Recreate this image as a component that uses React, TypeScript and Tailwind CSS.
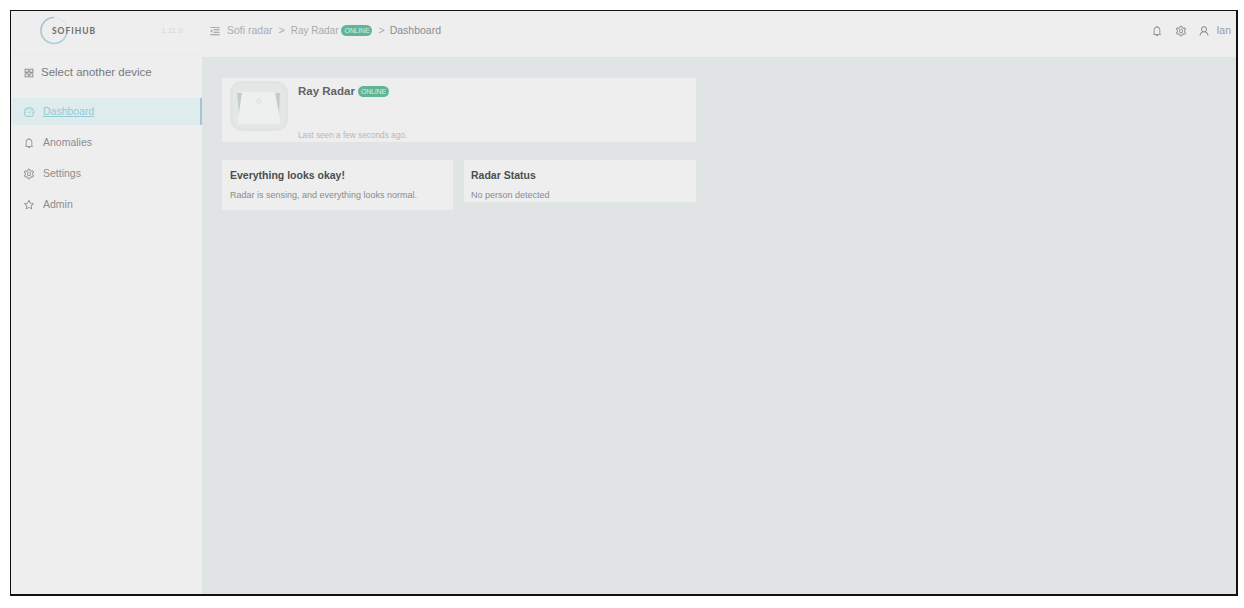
import React from 'react';
import {
  AiOutlineAppstore,
  AiOutlineBell,
  AiOutlineDashboard,
  AiOutlineMenuFold,
  AiOutlineSetting,
  AiOutlineStar,
  AiOutlineUser,
} from 'react-icons/ai';
import type { IconType } from 'react-icons';

interface NavItem {
  label: string;
  icon: IconType;
  active?: boolean;
}

const NAV_ITEMS: NavItem[] = [
  { label: 'Dashboard', icon: AiOutlineDashboard, active: true },
  { label: 'Anomalies', icon: AiOutlineBell },
  { label: 'Settings', icon: AiOutlineSetting },
  { label: 'Admin', icon: AiOutlineStar },
];

const OnlineBadge: React.FC = () => (
  <span className="flex h-[11px] w-[31px] items-center justify-center rounded-full bg-[#5fb596] text-[7px] leading-none tracking-tight text-[#d3efe4]">
    ONLINE
  </span>
);

const Logo: React.FC = () => (
  <svg className="h-[30px] w-[60px]" viewBox="0 0 60 30" fill="none">
    <defs>
      <linearGradient id="ring" x1="0" y1="0" x2="1" y2="1">
        <stop offset="0" stopColor="#a9bdc6" />
        <stop offset="1" stopColor="#a9d6de" />
      </linearGradient>
    </defs>
    <path d="M15 1.5A13 13 0 1 0 27.5 18" stroke="url(#ring)" strokeWidth="1.6" />
    <path d="M15 1.5A13 13 0 0 1 27.5 18" stroke="#dbe6e8" strokeWidth="1.2" />
    <text
      x="13"
      y="18"
      textLength="43"
      className="fill-[#6a6d70] font-['Lato','Liberation_Sans',sans-serif] text-[8.5px] font-bold"
    >
      SOFIHUB
    </text>
  </svg>
);

const RadarPicture: React.FC = () => (
  <svg className="h-[52px] w-[60px] shrink-0" viewBox="0 0 60 52">
    <rect x="1" y="1" width="58" height="50" rx="12" fill="#e0e5e3" />
    <rect x="4" y="4" width="52" height="44" rx="9" fill="#e3e7e6" />
    <path d="M8 13h6L10 34z" fill="#c6cbca" />
    <path d="M45 13h6l-1 21z" fill="#c6cbca" />
    <path d="M13 12h33l5 28q1 4-3 4H12q-4 0-3-4z" fill="#eeefef" />
    <circle cx="30" cy="21" r="2.5" fill="#e9e9e9" stroke="#e4e4e4" />
  </svg>
);

const Sidebar: React.FC = () => (
  <aside className="flex w-[191px] shrink-0 flex-col bg-[#eeeeee]">
    <div className="flex h-[45px] items-center justify-between border-b border-[#ebebec] pr-[19px] pb-[5px] pl-[28px]">
      <Logo />
      <span className="text-[8px] text-[#d5d5d7]">1.11.0</span>
    </div>
    <div className="flex h-[33px] items-center gap-[6px] pl-[12px] text-[11.5px] text-[#77797b]">
      <AiOutlineAppstore className="size-[12px] shrink-0" />
      <span>Select another device</span>
    </div>
    <nav className="mt-[9px] flex flex-col gap-[4px]">
      {NAV_ITEMS.map(({ label, icon: Icon, active }) => (
        <a
          key={label}
          className={
            active
              ? 'flex h-[27px] items-center gap-[8px] border-r-2 border-[#a3c5d0] bg-[#dfeced] pl-[12px] text-[10.5px] text-[#93cad4] underline'
              : 'flex h-[27px] items-center gap-[8px] pl-[12px] text-[10.5px] text-[#8b8d8f]'
          }
        >
          <Icon className="size-[12px] shrink-0" />
          <span>{label}</span>
        </a>
      ))}
    </nav>
  </aside>
);

const Header: React.FC = () => (
  <header className="flex h-[46px] shrink-0 items-center justify-between bg-[#eeeeee] pr-[5px] pb-[7px] pl-[7px] text-[10.5px]">
    <div className="flex items-center text-[#a9abac]">
      <AiOutlineMenuFold className="mr-[6px] size-[12px] text-[#96989a]" />
      <span>Sofi radar</span>
      <span className="mx-[6px]">&gt;</span>
      <span className="mr-[3px] text-[10px]">Ray Radar</span>
      <OnlineBadge />
      <span className="mr-[5px] ml-[6px]">&gt;</span>
      <span className="text-[#8b8d8f]">Dashboard</span>
    </div>
    <div className="flex items-center text-[#85878a]">
      <AiOutlineBell className="mr-[12px] size-[12px]" />
      <AiOutlineSetting className="mr-[11px] size-[12px]" />
      <AiOutlineUser className="mr-[6px] size-[12px]" />
      <span className="text-[#9b9d9f]">Ian</span>
    </div>
  </header>
);

interface StatusCardProps {
  title: string;
  message: string;
  className: string;
}

const StatusCard: React.FC<StatusCardProps> = ({ title, message, className }) => (
  <section className={`bg-[#eeeeee] pt-[7px] ${className}`}>
    <h2 className="text-[10.5px] leading-[16px] font-bold text-[#4c4d4f]">{title}</h2>
    <p className="mt-[6px] text-[9px] leading-[12px] text-[#8b8c8e]">{message}</p>
  </section>
);

export default function App() {
  return (
    <div className="h-[608px] w-[1244px] bg-white pt-[10px] pl-[10px] font-['Liberation_Sans',Arial,sans-serif]">
      <div className="flex h-[586px] w-[1228px] border-t border-r-2 border-b-2 border-l border-[#111111] bg-[#e0e4e5]">
        <Sidebar />
        <div className="flex min-w-0 flex-1 flex-col">
          <Header />
          <main className="flex w-[494px] flex-col gap-[18px] pt-[21px] pl-[20px]">
            <section className="flex h-[64px] gap-[9px] bg-[#eeeeee] pt-[2px] pl-[7px]">
              <RadarPicture />
              <div className="flex flex-col justify-between pt-[4px] pb-[1px]">
                <div className="flex items-center gap-[3px]">
                  <h1 className="text-[11.5px] leading-[14px] font-bold text-[#626466]">Ray Radar</h1>
                  <OnlineBadge />
                </div>
                <p className="text-[8.25px] leading-[11px] text-[#b6b8b9]">Last seen a few seconds ago.</p>
              </div>
            </section>
            <div className="flex items-start gap-[11px]">
              <StatusCard
                title="Everything looks okay!"
                message="Radar is sensing, and everything looks normal."
                className="h-[50px] w-[231px] pl-[8px]"
              />
              <StatusCard
                title="Radar Status"
                message="No person detected"
                className="h-[42px] w-[232px] pl-[7px]"
              />
            </div>
          </main>
        </div>
      </div>
    </div>
  );
}
